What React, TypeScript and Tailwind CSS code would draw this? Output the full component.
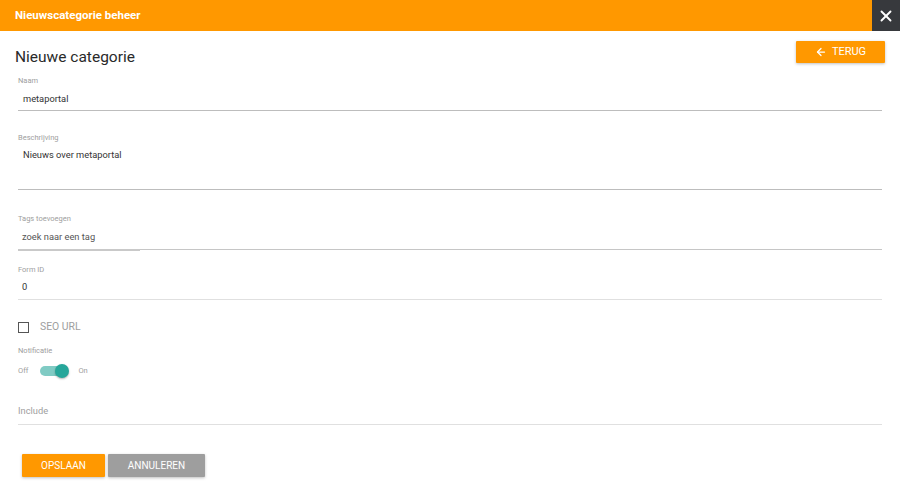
import { ArrowLeft, X } from 'lucide-react';

const font = { fontFamily: 'Roboto, "Liberation Sans", Arial, sans-serif' };

function Label({ children }: { children: React.ReactNode }) {
  return <div className="text-[7.5px] leading-[10px] text-[#9e9e9e]">{children}</div>;
}

export default function App() {
  return (
    <div className="w-[900px] h-[496px] bg-white overflow-hidden" style={font}>
      <header className="h-[31px] bg-[#ff9800] flex items-center justify-between">
        <h1 className="pl-[15px] text-[11.5px] font-bold text-white">Nieuwscategorie beheer</h1>
        <button className="w-[28px] h-[31px] bg-[#37393d] flex items-center justify-center text-white">
          <X size={18} strokeWidth={2.5} />
        </button>
      </header>

      <main className="px-[15px]">
        <div className="mt-[10px] flex justify-between items-start">
          <h2 className="mt-[6px] text-[15.5px] leading-[20px] text-[#2a2a2a]">Nieuwe categorie</h2>
          <button className="w-[89px] h-[22px] bg-[#ff9800] text-white text-[11px] flex items-center justify-center gap-[5px] shadow-[0_1px_3px_rgba(0,0,0,0.25)] rounded-[1px]">
            <ArrowLeft size={12} strokeWidth={2.5} />
            TERUG
          </button>
        </div>

        <div className="mx-[3px]">
          {/* Naam */}
          <div className="mt-[9px] border-b border-[#bdbdbd] pb-[4px]">
            <Label>Naam</Label>
            <div className="mt-[6px] pl-[5px] text-[9.3px] leading-[14px] text-[#333]">metaportal</div>
          </div>

          {/* Beschrijving */}
          <div className="mt-[22px] border-b border-[#bdbdbd]">
            <Label>Beschrijving</Label>
            <div className="mt-[5px] h-[41px] pl-[5px] text-[9.3px] leading-[14px] text-[#333]">Nieuws over metaportal</div>
          </div>

          {/* Tags */}
          <div className="mt-[24px] relative border-b border-[#c6c6c6] pb-[5px]">
            <Label>Tags toevoegen</Label>
            <div className="mt-[6px] pl-[4px] text-[9.3px] leading-[14px] text-[#555]">zoek naar een tag</div>
            <div className="absolute left-0 bottom-[-2px] w-[122px] h-[2px] bg-[#c9c9c9]" />
          </div>

          {/* Form ID */}
          <div className="mt-[15px] border-b border-[#e0e0e0] pb-[5px]">
            <Label>Form ID</Label>
            <div className="mt-[5px] pl-[4px] text-[9.3px] leading-[14px] text-[#333]">0</div>
          </div>

          {/* SEO URL */}
          <div className="mt-[21px] flex items-center gap-[11px] h-[12px]">
            <div className="w-[11px] h-[11px] border-[1.5px] border-[#555]" />
            <span className="text-[10.4px] text-[#9e9e9e]">SEO URL</span>
          </div>

          {/* Notificatie */}
          <div className="mt-[13px]">
            <Label>Notificatie</Label>
          </div>
          <div className="mt-[7px] h-[16px] flex items-center text-[7.5px] text-[#9e9e9e]">
            <span>Off</span>
            <div className="ml-[12px] relative w-[27px] h-[10px] rounded-full bg-[#80cbc4]">
              <div className="absolute right-[-2px] top-[-2px] w-[14px] h-[14px] rounded-full bg-[#26a69a] shadow-[0_1px_2px_rgba(0,0,0,0.3)]" />
            </div>
            <span className="ml-[11px]">On</span>
          </div>

          {/* Include */}
          <div className="mt-[25px] border-b border-[#e0e0e0] pb-[6px]">
            <div className="text-[9.3px] leading-[14px] text-[#9e9e9e]">Include</div>
          </div>

          <div className="mt-[29px] ml-[4px] flex gap-[3px]">
            <button className="w-[83px] h-[23px] bg-[#ff9800] text-white text-[10px] shadow-[0_1px_3px_rgba(0,0,0,0.25)] rounded-[1px]">
              OPSLAAN
            </button>
            <button className="w-[97px] h-[23px] bg-[#9e9e9e] text-white text-[10px] shadow-[0_1px_3px_rgba(0,0,0,0.25)] rounded-[1px]">
              ANNULEREN
            </button>
          </div>
        </div>
      </main>
    </div>
  );
}
